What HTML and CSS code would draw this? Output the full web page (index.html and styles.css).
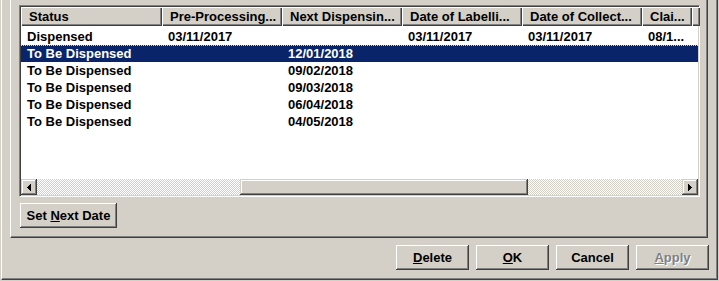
FILE: index.html
```html
<!DOCTYPE html>
<html>
<head>
  <title>Dispensing Schedule</title>
  <meta name="viewport" content="width=device-width, initial-scale=1.0">
  <link rel="stylesheet" href="styles.css">
</head>
<body>

  <div class="panel">
    <div class="group">
      <div class="list">
        <div class="list-head">
          <div class="hcell">Status</div>
          <div class="hcell">Pre-Processing...</div>
          <div class="hcell">Next Dispensin...</div>
          <div class="hcell">Date of Labelli...</div>
          <div class="hcell">Date of Collect...</div>
          <div class="hcell">Clai...</div>
          <div class="hcell"></div>
        </div>

        <div class="rows">
          <div class="row">
            <span>Dispensed</span><span>03/11/2017</span><span></span><span>03/11/2017</span><span>03/11/2017</span><span>08/1...</span>
          </div>
          <div class="row selected">
            <span>To Be Dispensed</span><span></span><span>12/01/2018</span><span></span><span></span><span></span>
          </div>
          <div class="row">
            <span>To Be Dispensed</span><span></span><span>09/02/2018</span><span></span><span></span><span></span>
          </div>
          <div class="row">
            <span>To Be Dispensed</span><span></span><span>09/03/2018</span><span></span><span></span><span></span>
          </div>
          <div class="row">
            <span>To Be Dispensed</span><span></span><span>06/04/2018</span><span></span><span></span><span></span>
          </div>
          <div class="row">
            <span>To Be Dispensed</span><span></span><span>04/05/2018</span><span></span><span></span><span></span>
          </div>
        </div>

        <div class="hscroll">
          <div class="sbtn">
            <svg width="16" height="12" viewBox="0 0 16 12"><path d="M6 6h1v1h-1z M7 5h1v3h-1z M8 4h1v5h-1z M9 3h1v7h-1z" fill="#000"/></svg>
          </div>
          <div class="track-a"></div>
          <div class="thumb"></div>
          <div class="track-b"></div>
          <div class="sbtn">
            <svg width="16" height="12" viewBox="0 0 16 12"><path d="M9 6h1v1h-1z M8 5h1v3h-1z M7 4h1v5h-1z M6 3h1v7h-1z" fill="#000"/></svg>
          </div>
        </div>
      </div>

      <button class="btn set-btn">Set <u>N</u>ext Date</button>
    </div>

    <div class="actions">
      <button class="btn"><u>D</u>elete</button>
      <button class="btn"><u>O</u>K</button>
      <button class="btn">Cancel</button>
      <button class="btn disabled" disabled><u>A</u>pply</button>
    </div>
  </div>

</body>
</html>
```

FILE: styles.css
```css
body {
  margin: 0;
  width: 719px;
  height: 281px;
  overflow: hidden;
  background: #d4d0c8;
  font-family: "Liberation Sans", Arial, sans-serif;
  font-weight: bold;
  font-size: 13px;
  color: #000;
}
.panel {
  margin-left: 1px;
  width: 717px;
  height: 280px;
  box-sizing: border-box;
  border-left: 1px solid #fff;
  border-right: 1px solid #404040;
  border-bottom: 1px solid #404040;
  box-shadow: inset -1px -1px #808080;
}
.group {
  margin-left: 8px;
  width: 698px;
  height: 238px;
  box-sizing: border-box;
  border-left: 1px solid #fff;
  border-right: 1px solid #404040;
  border-bottom: 1px solid #404040;
  box-shadow: inset -1px -1px #808080;
  padding: 5px 0 0 8px;
}
.list {
  width: 681px;
  height: 192px;
  box-sizing: border-box;
  border: 1px solid;
  border-color: #808080 #fff #fff #808080;
  box-shadow: inset 1px 1px #404040, inset -1px -1px #d4d0c8;
  padding: 1px;
  background: #fff;
  display: flex;
  flex-direction: column;
}
.list-head, .row {
  display: grid;
  grid-template-columns: 141px 120px 120px 120px 120px 50px 1fr;
}
.hcell {
  height: 19px;
  line-height: 19px;
  padding-left: 8px;
  background: #d4d0c8;
  box-shadow: inset 1px 1px #fff, inset -1px -1px #404040, inset -2px -2px #808080;
  white-space: nowrap;
  overflow: hidden;
}
.rows {
  flex: 1;
  padding-top: 2px;
}
.row {
  height: 17px;
  line-height: 17px;
  box-sizing: border-box;
}
.row span {
  padding-left: 6px;
  white-space: nowrap;
  overflow: hidden;
}
.row.selected {
  background: #0a246a;
  color: #fff;
  border-top: 1px dotted #d4d0c8;
  line-height: 15px;
}
.hscroll {
  height: 16px;
  display: flex;
}
.sbtn {
  width: 16px;
  height: 16px;
  background: #d4d0c8;
  box-shadow: inset -1px -1px #404040, inset 1px 1px #d4d0c8, inset -2px -2px #808080, inset 2px 2px #fff;
  display: flex;
  align-items: center;
  justify-content: center;
}
.track-a, .track-b {
  background: repeating-conic-gradient(#d4d0c8 0 25%, #fff 0 50%) 0 0 / 2px 2px;
}
.track-a {
  width: 203px;
}
.track-b {
  flex: 1;
}
.thumb {
  width: 288px;
  background: #d4d0c8;
  box-shadow: inset -1px -1px #404040, inset 1px 1px #d4d0c8, inset -2px -2px #808080, inset 2px 2px #fff;
}
.btn {
  font: inherit;
  color: #000;
  width: 73px;
  height: 25px;
  padding: 0;
  border: none;
  background: #d4d0c8;
  box-shadow: inset -1px -1px #404040, inset 1px 1px #fff, inset -2px -2px #808080, inset 2px 2px #d4d0c8;
}
.set-btn {
  display: block;
  width: 97px;
  margin: 6px 0 0 1px;
}
.actions {
  display: flex;
  justify-content: flex-end;
  gap: 7px;
  margin-top: 7px;
  padding-right: 8px;
}
.btn.disabled {
  color: #808080;
  text-shadow: 1px 1px #fff;
}
```
